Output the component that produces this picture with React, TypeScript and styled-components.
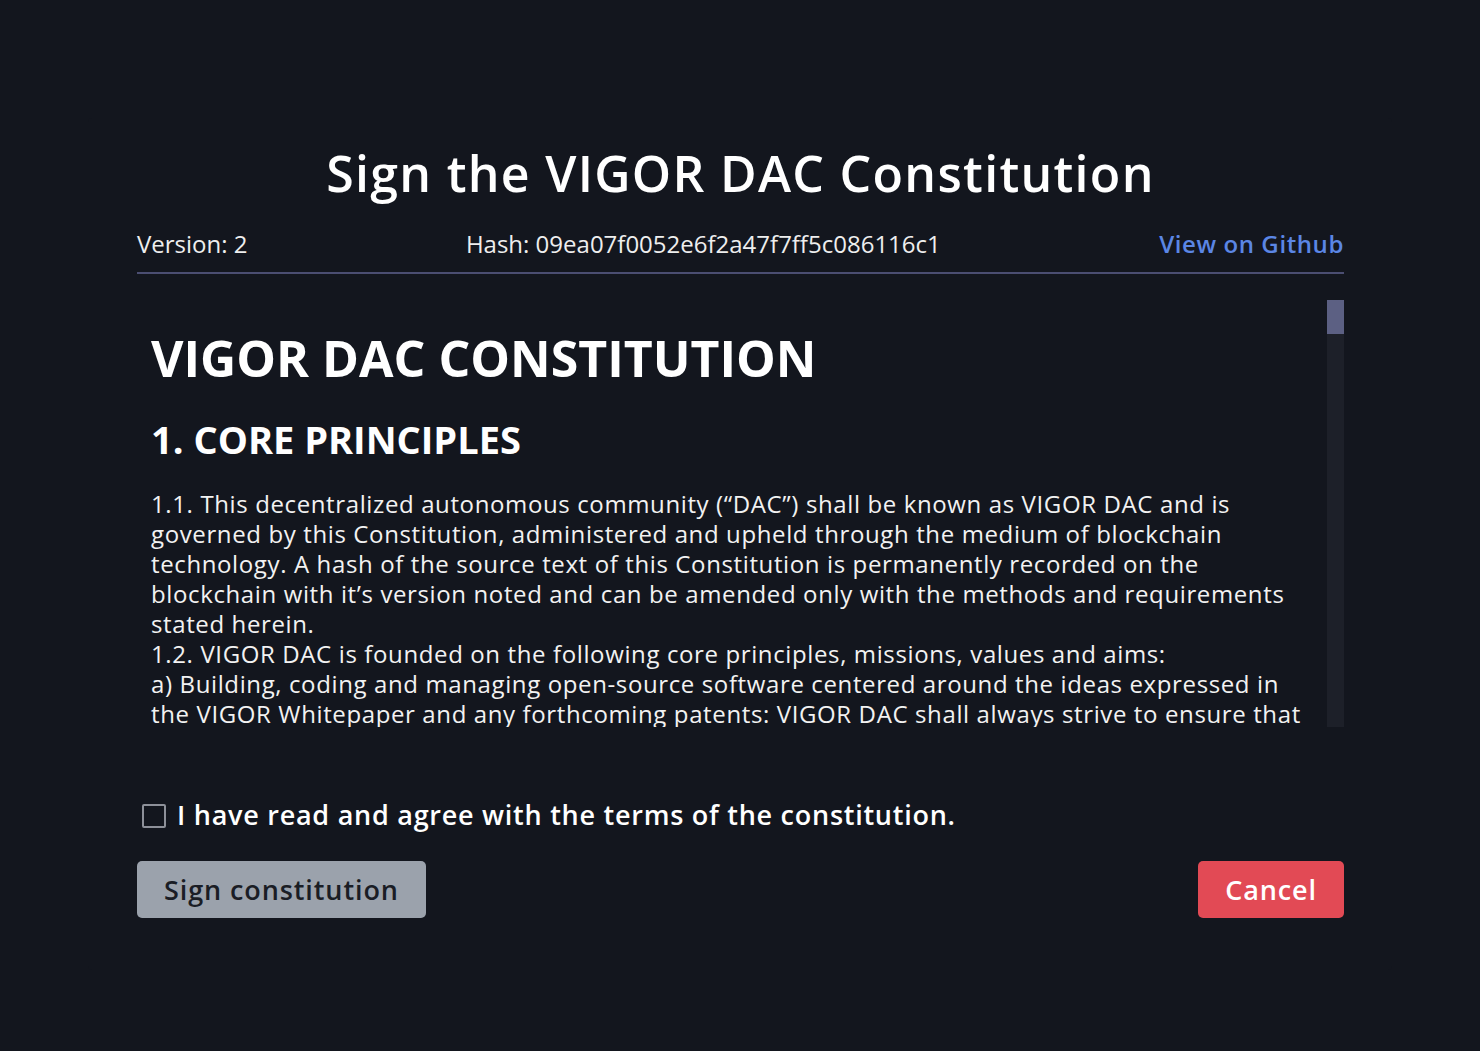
import { createGlobalStyle } from 'styled-components';
import styled from 'styled-components';

const GlobalStyle = createGlobalStyle`
  html, body {
    margin: 0;
    padding: 0;
    background: #13161e;
  }
  body {
    font-family: 'Open Sans', 'DejaVu Sans', sans-serif;
    color: #ffffff;
  }
`;

const Page = styled.div`
  min-height: 1051px;
  box-sizing: border-box;
  display: flex;
  justify-content: center;
  padding-top: 118px;
`;

const Modal = styled.div`
  width: 1304px;
  height: 852px;
  box-sizing: border-box;
  padding: 20px 48px 0 49px;
  border-radius: 4px;
  background: #13161e;
  display: flex;
  flex-direction: column;
`;

const Title = styled.h1`
  margin: 0;
  text-align: center;
  font-size: 50px;
  line-height: 70px;
  font-weight: 600;
  letter-spacing: 1.3px;
  color: #ffffff;
`;

const MetaRow = styled.div`
  margin-top: 20px;
  display: flex;
  justify-content: space-between;
  align-items: baseline;
  padding-bottom: 12px;
  border-bottom: 2px solid #4b4e72;
  font-size: 24px;
  line-height: 32px;
  color: #eeeeee;
`;

const GithubLink = styled.a`
  color: #5b86e5;
  font-weight: 600;
  letter-spacing: 0.6px;
  text-decoration: none;
`;

const ScrollFrame = styled.div`
  margin-top: 26px;
  height: 427px;
  display: flex;
`;

const Scroller = styled.div`
  flex: 1;
  overflow: hidden;
  padding-left: 14px;
`;

const Track = styled.div`
  width: 17px;
  background: #1d2029;
`;

const Thumb = styled.div`
  height: 34px;
  background: #5c6083;
`;

const DocTitle = styled.h2`
  margin: 28px 0 0;
  font-size: 50px;
  line-height: 60px;
  font-weight: 700;
  color: #ffffff;
`;

const SectionTitle = styled.h3`
  margin: 26px 0 0;
  font-size: 38px;
  line-height: 50px;
  font-weight: 700;
  color: #ffffff;
`;

const Body = styled.p`
  margin: 25px 0 0;
  font-size: 24px;
  line-height: 30px;
  letter-spacing: 0.62px;
  white-space: nowrap;
  color: #f2f2f2;
`;

const AgreeRow = styled.label`
  margin-top: 70px;
  display: flex;
  align-items: center;
  gap: 11px;
  padding-left: 5px;
  font-size: 27px;
  line-height: 36px;
  font-weight: 600;
  letter-spacing: 0.74px;
  color: #ffffff;
  cursor: pointer;
`;

const Checkbox = styled.span`
  width: 20px;
  height: 20px;
  margin-top: 2px;
  border: 2px solid #8d9099;
  border-radius: 2px;
  background: #13161e;
`;

const Actions = styled.div`
  margin-top: 28px;
  display: flex;
  justify-content: space-between;
`;

const Button = styled.button<{ $variant: 'muted' | 'danger' }>`
  height: 57px;
  padding: 0 27px;
  border: 0;
  border-radius: 5px;
  font-family: inherit;
  font-size: 27px;
  font-weight: 600;
  letter-spacing: 0.9px;
  cursor: pointer;
  background: ${({ $variant }) => ($variant === 'danger' ? '#e24a55' : '#9ba2ac')};
  color: ${({ $variant }) => ($variant === 'danger' ? '#ffffff' : '#1a1d25')};
`;

const paragraphs: string[][] = [
  [
    '1.1. This decentralized autonomous community (“DAC”) shall be known as VIGOR DAC and is',
    'governed by this Constitution, administered and upheld through the medium of blockchain',
    'technology. A hash of the source text of this Constitution is permanently recorded on the',
    'blockchain with it’s version noted and can be amended only with the methods and requirements',
    'stated herein.',
    '1.2. VIGOR DAC is founded on the following core principles, missions, values and aims:',
    'a) Building, coding and managing open-source software centered around the ideas expressed in',
    'the VIGOR Whitepaper and any forthcoming patents: VIGOR DAC shall always strive to ensure that',
  ],
];

export default function App() {
  return (
    <>
      <GlobalStyle />
      <Page>
        <Modal>
          <Title>Sign the VIGOR DAC Constitution</Title>
          <MetaRow>
            <span>Version: 2</span>
            <span>Hash: 09ea07f0052e6f2a47f7ff5c086116c1</span>
            <GithubLink href="#">View on Github</GithubLink>
          </MetaRow>
          <ScrollFrame>
            <Scroller>
              <DocTitle>VIGOR DAC CONSTITUTION</DocTitle>
              <SectionTitle>1. CORE PRINCIPLES</SectionTitle>
              {paragraphs.map((lines, i) => (
                <Body key={i}>
                  {lines.map((line, j) => (
                    <span key={j}>
                      {line}
                      <br />
                    </span>
                  ))}
                </Body>
              ))}
            </Scroller>
            <Track>
              <Thumb />
            </Track>
          </ScrollFrame>
          <AgreeRow>
            <Checkbox />
            I have read and agree with the terms of the constitution.
          </AgreeRow>
          <Actions>
            <Button $variant="muted">Sign constitution</Button>
            <Button $variant="danger">Cancel</Button>
          </Actions>
        </Modal>
      </Page>
    </>
  );
}
